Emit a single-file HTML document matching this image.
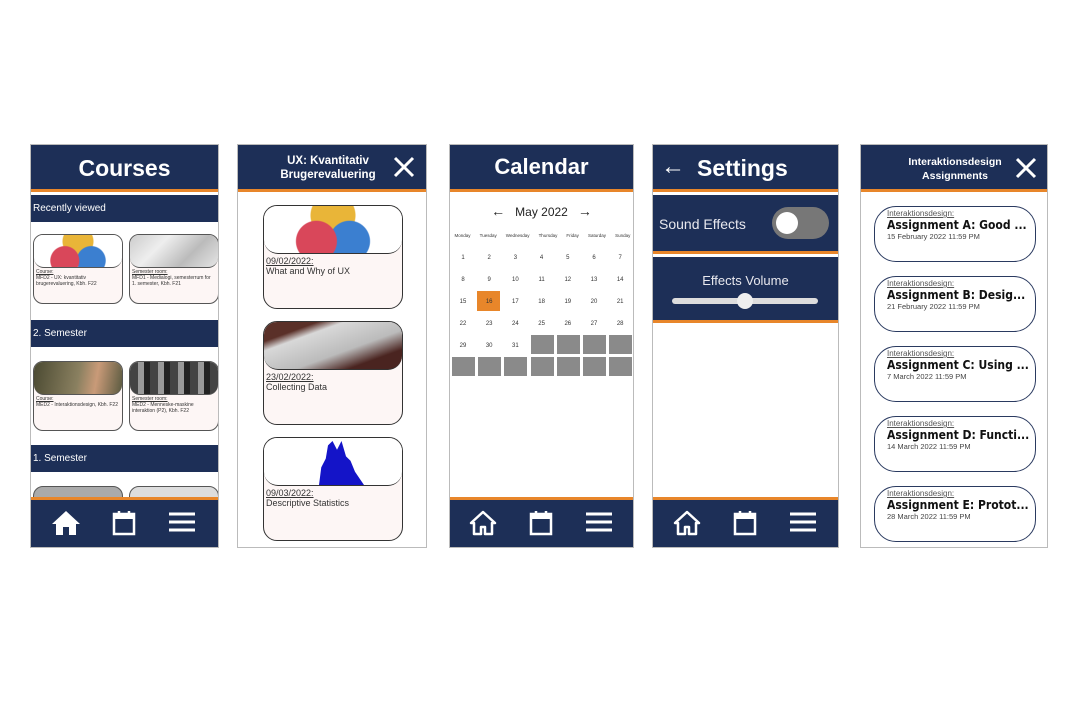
<!DOCTYPE html>
<html><head><meta charset="utf-8"><style>
*{margin:0;padding:0;box-sizing:border-box}
body{width:1080px;height:714px;background:#fff;position:relative;overflow:hidden;font-family:"Liberation Sans",sans-serif}
.a{position:absolute}
.scr{position:absolute;top:144px;height:404px;border:1.5px solid #bbb;background:#fff;overflow:hidden}
.hd{position:absolute;left:0;right:0;top:0;height:47px;background:#1d2f57;border-bottom:3px solid #e8862a;color:#fff}
.nav{position:absolute;left:0;right:0;bottom:0;height:50px;background:#1d2f57;border-top:3px solid #e8862a}
.bar{position:absolute;left:0;right:0;height:27px;background:#1d2f57;color:#fff;font-size:10px;padding:8px 2px}
.cc{position:absolute;width:90px;height:70px;border:1.5px solid #555;border-radius:10px;background:#fdf6f5;overflow:hidden;font-size:5px;color:#333}
.cc .im{height:33px;border-bottom:1.5px solid #555;border-radius:0 0 10px 10px}
.lc{position:absolute;left:25px;width:140px;height:104px;border:1.5px solid #333;border-radius:14px;background:#fdf6f5;overflow:hidden;font-size:9px;color:#333}
.lc .im{height:48px;border-bottom:1.5px solid #333;border-radius:0 0 14px 14px;background:#fff;overflow:hidden;position:relative}
.lc p{padding:2px 2px 0}
.ac{position:absolute;left:13px;width:162px;height:56px;border:1.5px solid #2a3a60;border-radius:22px;background:#fff;padding:2px 12px}
.ac .s{font-size:8px;color:#555;text-decoration:underline}
.ac .t{font-size:12px;font-weight:bold;color:#111;font-family:"DejaVu Sans Condensed","Liberation Sans Narrow",sans-serif;white-space:nowrap}
.ac .d{font-size:7.5px;color:#444;font-family:"Liberation Sans Narrow",sans-serif}
.cal{position:absolute;font-size:6px;color:#333;text-align:center;width:26px}
.g{position:absolute;width:23px;height:19px;background:#8a8a8a}
</style></head><body>

<!-- Screen 1 -->
<div class="scr" style="left:30px;width:189px">
 <div class="hd"><div class="a" style="left:0;right:0;top:10px;text-align:center;font-size:23px;font-weight:bold">Courses</div></div>
 <div class="bar" style="top:50px">Recently viewed</div>
 <div class="cc" style="left:2px;top:89px"><div class="im" style="background:radial-gradient(circle at 35% 80%,#d9475a 0 14px,transparent 15px),radial-gradient(circle at 65% 80%,#3b7fd0 0 14px,transparent 15px),radial-gradient(circle at 50% 20%,#e9b538 0 15px,#fff 16px)"></div><div style="padding:1px 2px"><u>Course:</u><br>MFD2 - UX: kvantitativ brugerevaluering, Kbh. F22</div></div>
 <div class="cc" style="left:98px;top:89px"><div class="im" style="background:linear-gradient(135deg,#ccc,#eee,#bbb,#e5e5e5)"></div><div style="padding:1px 2px"><u>Semester room:</u><br>MFD1 - Medialogi, semesterrum for 1. semester, Kbh. F21</div></div>
 <div class="bar" style="top:175px">2. Semester</div>
 <div class="cc" style="left:2px;top:216px"><div class="im" style="background:linear-gradient(100deg,#4b4a32,#8a8060 50%,#c99a78 70%,#5a5a40)"></div><div style="padding:1px 2px"><u>Course:</u><br>MED2 - Interaktionsdesign, Kbh. F22</div></div>
 <div class="cc" style="left:98px;top:216px"><div class="im" style="background:repeating-linear-gradient(90deg,#444 0 8px,#999 8px 14px,#222 14px 20px)"></div><div style="padding:1px 2px"><u>Semester room:</u><br>MED2 - Menneske-maskine interaktion (P2), Kbh. F22</div></div>
 <div class="bar" style="top:300px">1. Semester</div>
 <div class="cc" style="left:2px;top:341px;background:#aaa"></div>
 <div class="cc" style="left:98px;top:341px;background:#ddd"></div>
 <div class="nav">
  <svg class="a" style="left:20px;top:9px" width="30" height="28" viewBox="0 0 30 28"><path d="M15 2L1 15h4v11h7v-8h6v8h7V15h4z" fill="#fff"/></svg>
  <svg class="a" style="left:80px;top:9px" width="26" height="28" viewBox="0 0 26 28"><rect x="3" y="5" width="20" height="20" fill="none" stroke="#fff" stroke-width="2.5"/><rect x="3" y="5" width="20" height="5" fill="#fff"/><path d="M8 2v5M18 2v5" stroke="#fff" stroke-width="2.5"/></svg>
  <svg class="a" style="left:137px;top:11px" width="28" height="22"><path d="M1 3h26M1 11h26M1 19h26" stroke="#fff" stroke-width="3"/></svg>
 </div>
</div>

<!-- Screen 2 -->
<div class="scr" style="left:237px;width:190px">
 <div class="hd"><div class="a" style="left:30px;width:120px;top:9px;text-align:center;font-size:11.5px;font-weight:bold;line-height:14px">UX: Kvantitativ<br>Brugerevaluering</div>
  <svg class="a" style="left:155px;top:11px" width="22" height="22"><path d="M2 2L20 20M20 2L2 20" stroke="#fff" stroke-width="3"/></svg></div>
 <div class="lc" style="top:60px"><div class="im" style="background:radial-gradient(circle at 38% 75%,#d9475a 0 20px,transparent 21px),radial-gradient(circle at 62% 75%,#3b7fd0 0 20px,transparent 21px),radial-gradient(circle at 50% 20%,#e9b538 0 22px,#fff 23px)"></div><p style="padding:2px 2px 0"><u>09/02/2022:</u><br>What and Why of UX</p></div>
 <div class="lc" style="top:176px"><div class="im" style="background:linear-gradient(160deg,#5a3028 0 20%,#d8d8d8 30%,#bbb 60%,#4a2420 80%)"></div><p><u>23/02/2022:</u><br>Collecting Data</p></div>
 <div class="lc" style="top:292px"><div class="im"><div class="a" style="left:55px;bottom:0;width:45px;height:44px;background:#1414c8;clip-path:polygon(0 100%,5% 60%,15% 40%,20% 10%,30% 0,40% 20%,50% 0,60% 35%,70% 45%,80% 70%,90% 85%,100% 100%)"></div></div><p><u>09/03/2022:</u><br>Descriptive Statistics</p></div>
</div>

<!-- Screen 3 -->
<div class="scr" style="left:449px;width:185px">
 <div class="hd"><div class="a" style="left:0;right:0;top:9px;text-align:center;font-size:22px;font-weight:bold">Calendar</div></div>
 <div class="a" style="left:0;right:0;top:58px;text-align:center;font-size:12px;color:#222;white-space:nowrap"><span style="font-size:14px">←</span>&nbsp;&nbsp; May 2022 &nbsp;&nbsp;<span style="font-size:14px">→</span></div>
 <div class="a" style="left:0;top:88px;width:185px;font-size:4.5px;color:#333;display:flex;justify-content:space-around"><span>Monday</span><span>Tuesday</span><span>Wednesday</span><span>Thursday</span><span>Friday</span><span>Saturday</span><span>Sunday</span></div>
 <div class="a" style="left:27px;width:23px;height:20px;background:#e8862a;top:146px"></div>
 <div id="cal"></div>
 <div class="nav">
  <svg class="a" style="left:18px;top:9px" width="30" height="28" viewBox="0 0 30 28"><path d="M15 3L3 14h3v11h7v-7h4v7h7V14h3z" fill="none" stroke="#fff" stroke-width="2.5" stroke-linejoin="round"/></svg>
  <svg class="a" style="left:78px;top:9px" width="26" height="28" viewBox="0 0 26 28"><rect x="3" y="5" width="20" height="20" fill="none" stroke="#fff" stroke-width="2.5"/><rect x="3" y="5" width="20" height="5" fill="#fff"/><path d="M8 2v5M18 2v5" stroke="#fff" stroke-width="2.5"/></svg>
  <svg class="a" style="left:135px;top:11px" width="28" height="22"><path d="M1 3h26M1 11h26M1 19h26" stroke="#fff" stroke-width="3"/></svg>
 </div>
</div>

<!-- Screen 4 -->
<div class="scr" style="left:652px;width:187px">
 <div class="hd"><div class="a" style="left:8px;top:8px;font-size:24px">←</div><div class="a" style="left:44px;top:10px;font-size:23px;font-weight:bold">Settings</div></div>
 <div class="a" style="left:0;right:0;top:50px;height:59px;background:#1d2f57;border-bottom:3px solid #e8862a"><div class="a" style="left:6px;top:21px;color:#e8e8ee;font-size:14px">Sound Effects</div><div class="a" style="left:119px;top:12px;width:57px;height:32px;border-radius:16px;background:#777"><div class="a" style="left:4px;top:5px;width:22px;height:22px;border-radius:50%;background:#fff"></div></div></div>
 <div class="a" style="left:0;right:0;top:112px;height:66px;background:#1d2f57;border-bottom:3px solid #e8862a"><div class="a" style="left:0;right:0;top:16px;text-align:center;color:#e8e8ee;font-size:13px">Effects Volume</div><div class="a" style="left:19px;top:41px;width:146px;height:6px;border-radius:3px;background:#ddd"></div><div class="a" style="left:84px;top:36px;width:16px;height:16px;border-radius:50%;background:#eee"></div></div>
 <div class="nav">
  <svg class="a" style="left:19px;top:9px" width="30" height="28" viewBox="0 0 30 28"><path d="M15 3L3 14h3v11h7v-7h4v7h7V14h3z" fill="none" stroke="#fff" stroke-width="2.5" stroke-linejoin="round"/></svg>
  <svg class="a" style="left:79px;top:9px" width="26" height="28" viewBox="0 0 26 28"><rect x="3" y="5" width="20" height="20" fill="none" stroke="#fff" stroke-width="2.5"/><rect x="3" y="5" width="20" height="5" fill="#fff"/><path d="M8 2v5M18 2v5" stroke="#fff" stroke-width="2.5"/></svg>
  <svg class="a" style="left:136px;top:11px" width="28" height="22"><path d="M1 3h26M1 11h26M1 19h26" stroke="#fff" stroke-width="3"/></svg>
 </div>
</div>

<!-- Screen 5 -->
<div class="scr" style="left:860px;width:188px">
 <div class="hd"><div class="a" style="left:30px;width:128px;top:10px;text-align:center;font-size:10.5px;font-weight:bold;line-height:14px">Interaktionsdesign<br>Assignments</div>
  <svg class="a" style="left:154px;top:12px" width="22" height="22"><path d="M2 2L20 20M20 2L2 20" stroke="#fff" stroke-width="3"/></svg></div>
 <div class="ac" style="top:61px"><div class="s">Interaktionsdesign:</div><div class="t">Assignment A: Good ...</div><div class="d">15 February 2022 11:59 PM</div></div>
 <div class="ac" style="top:131px"><div class="s">Interaktionsdesign:</div><div class="t">Assignment B: Desig...</div><div class="d">21 February 2022 11:59 PM</div></div>
 <div class="ac" style="top:201px"><div class="s">Interaktionsdesign:</div><div class="t">Assignment C: Using ...</div><div class="d">7 March 2022 11:59 PM</div></div>
 <div class="ac" style="top:271px"><div class="s">Interaktionsdesign:</div><div class="t">Assignment D: Functi...</div><div class="d">14 March 2022 11:59 PM</div></div>
 <div class="ac" style="top:341px"><div class="s">Interaktionsdesign:</div><div class="t">Assignment E: Protot...</div><div class="d">28 March 2022 11:59 PM</div></div>
</div>

<script>
(function(){var c=document.getElementById('cal'),h='';var ys=[108,130,152,174,196];
for(var d=1;d<=31;d++){var i=d-1,r=Math.floor(i/7),k=i%7;h+='<div class="cal" style="left:'+(k*26.2)+'px;top:'+(ys[r]+2)+'px">'+d+'</div>';}
for(var k=3;k<7;k++)h+='<div class="g" style="left:'+(k*26.2+2)+'px;top:190px"></div>';
for(var k=0;k<7;k++)h+='<div class="g" style="left:'+(k*26.2+2)+'px;top:212px"></div>';
c.innerHTML=h;})();
</script>
</body></html>
